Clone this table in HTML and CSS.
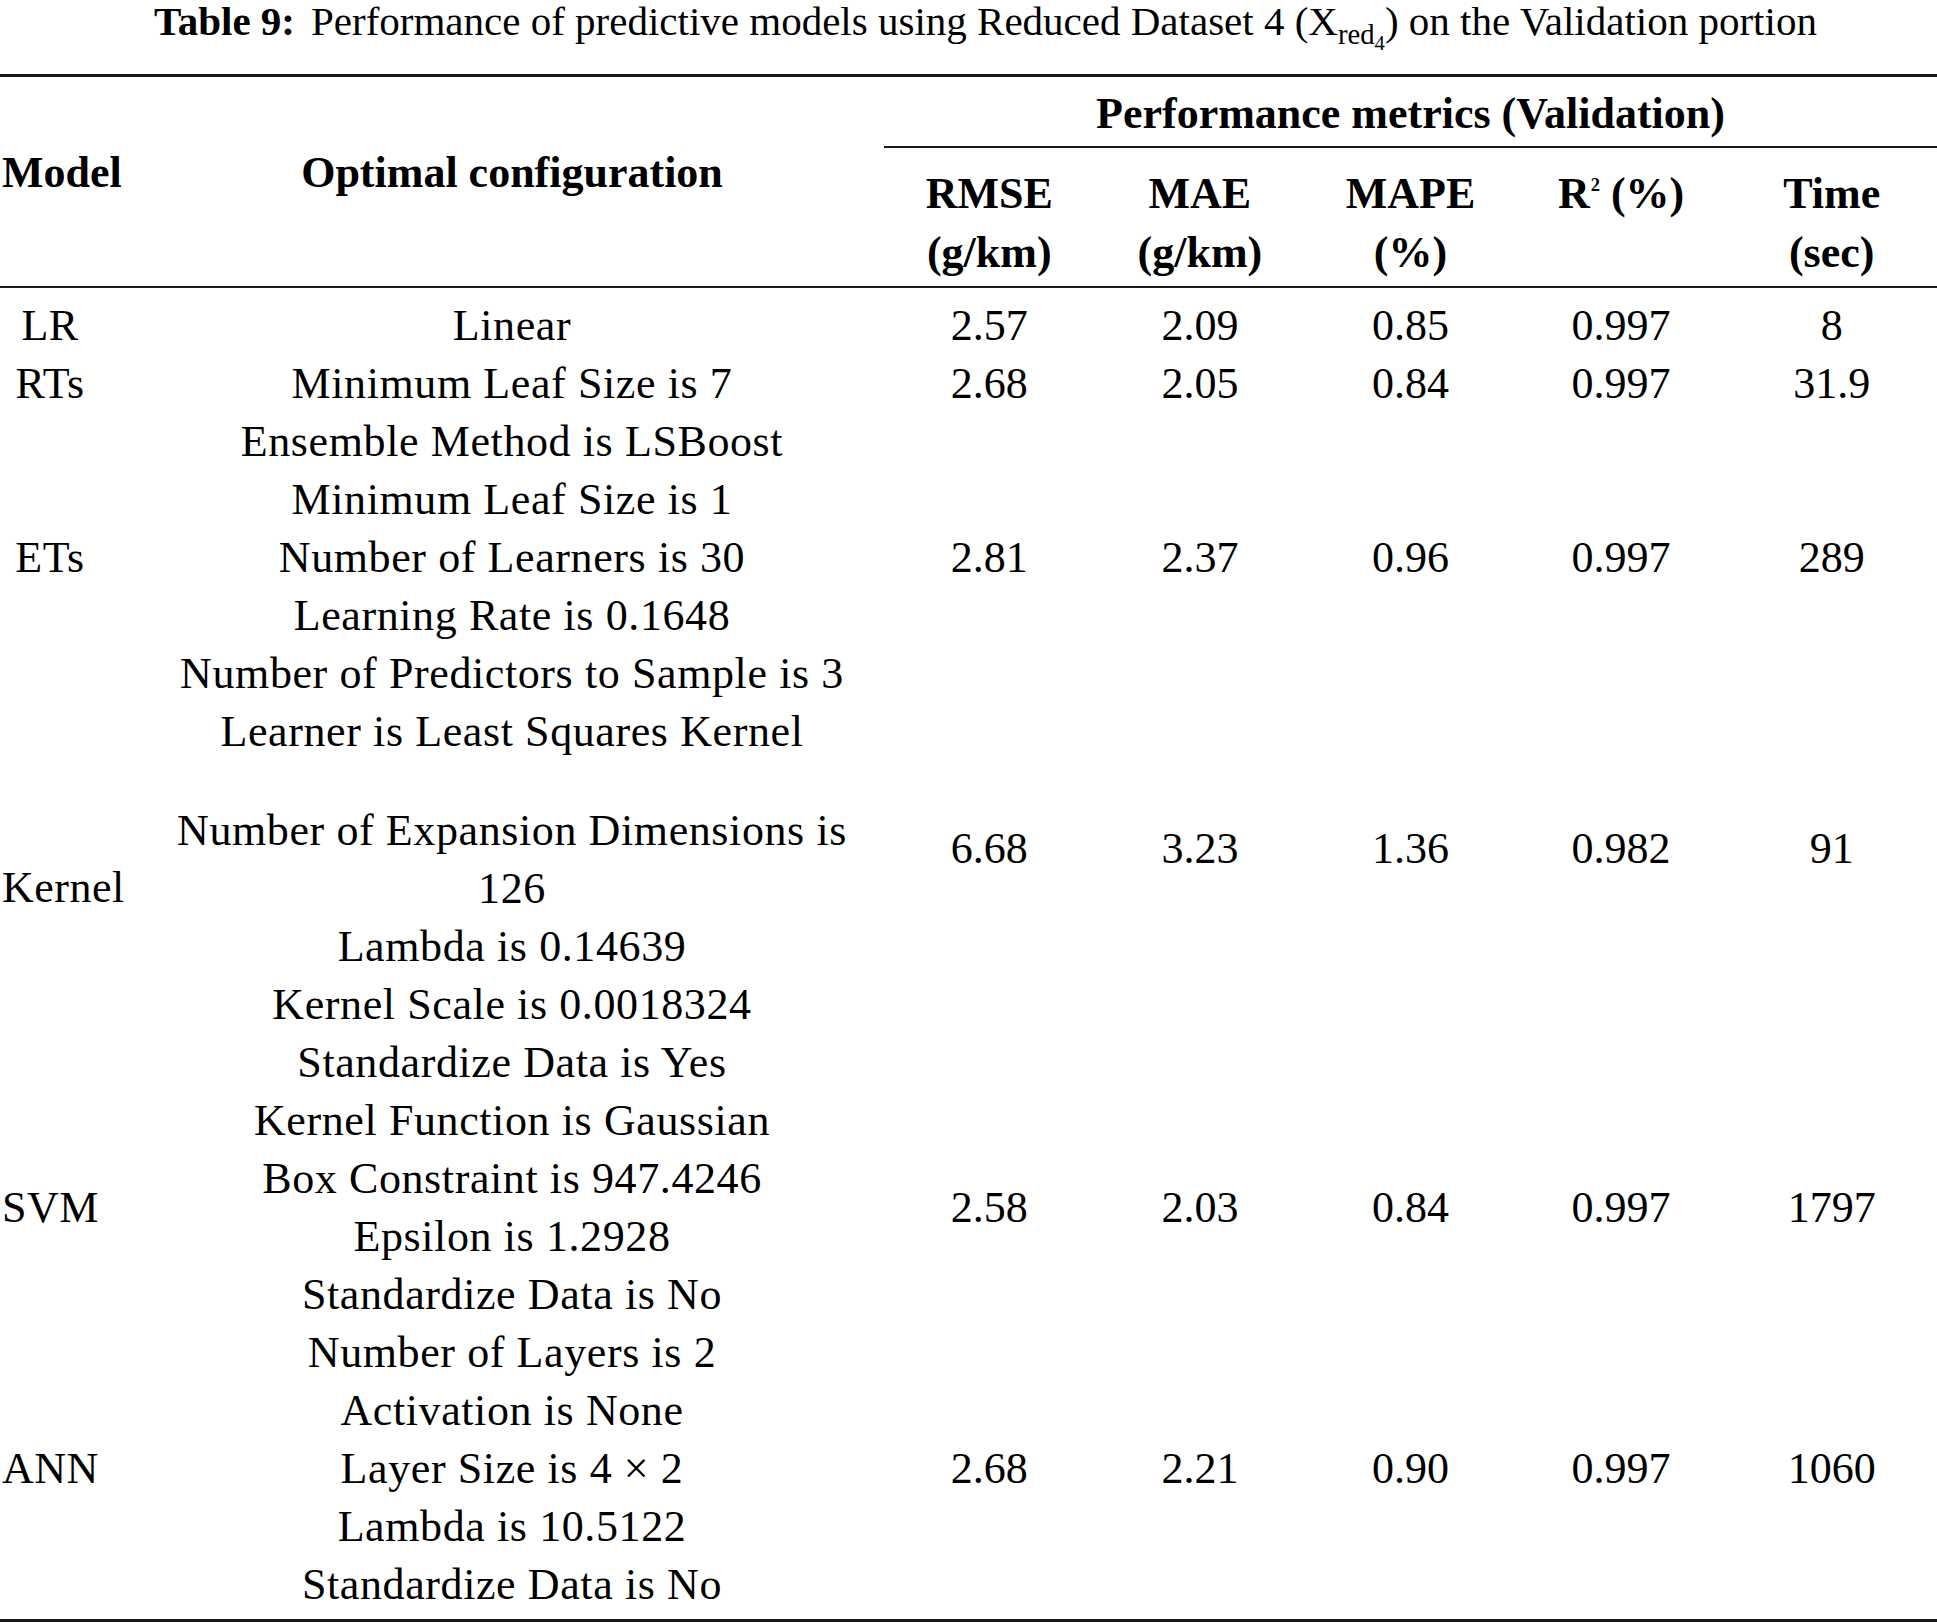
FILE: index.html
```html
<!DOCTYPE html>
<html lang="en">
<head>
<meta charset="utf-8">
<title>Table 9</title>
<link rel="stylesheet" href="styles.css">
</head>
<body>
<div class="caption"><b class="cap-label">Table 9:</b><span class="cap-text">Performance of predictive models using Reduced Dataset 4 (X<sub class="sub1">red<sub class="sub2">4</sub></sub>) on the Validation portion</span></div>
<div class="table">
  <div class="thead">
    <div class="h-model">Model</div>
    <div class="h-config">Optimal configuration</div>
    <div class="h-perf">Performance metrics (Validation)</div>
    <div class="h-metric"><div class="hl">RMSE</div><div class="hl">(g/km)</div></div>
    <div class="h-metric"><div class="hl">MAE</div><div class="hl">(g/km)</div></div>
    <div class="h-metric"><div class="hl">MAPE</div><div class="hl">(%)</div></div>
    <div class="h-metric"><div class="hl">R<sup class="sup">2</sup> (%)</div><div class="hl">&nbsp;</div></div>
    <div class="h-metric"><div class="hl">Time</div><div class="hl">(sec)</div></div>
  </div>
  <div class="tbody">
    <div class="group">
      <div class="c-model">LR</div>
      <div class="c-config"><div class="ln">Linear</div></div>
      <div class="c-val">2.57</div><div class="c-val">2.09</div><div class="c-val">0.85</div><div class="c-val">0.997</div><div class="c-val">8</div>
    </div>
    <div class="group">
      <div class="c-model">RTs</div>
      <div class="c-config"><div class="ln">Minimum Leaf Size is 7</div></div>
      <div class="c-val">2.68</div><div class="c-val">2.05</div><div class="c-val">0.84</div><div class="c-val">0.997</div><div class="c-val">31.9</div>
    </div>
    <div class="group">
      <div class="c-model">ETs</div>
      <div class="c-config">
        <div class="ln">Ensemble Method is LSBoost</div>
        <div class="ln">Minimum Leaf Size is 1</div>
        <div class="ln">Number of Learners is 30</div>
        <div class="ln">Learning Rate is 0.1648</div>
        <div class="ln">Number of Predictors to Sample is 3</div>
      </div>
      <div class="c-val">2.81</div><div class="c-val">2.37</div><div class="c-val">0.96</div><div class="c-val">0.997</div><div class="c-val">289</div>
    </div>
    <div class="group group-kernel">
      <div class="c-model">Kernel</div>
      <div class="c-config">
        <div class="ln">Learner is Least Squares Kernel</div>
        <div class="ln ln-gap">Number of Expansion Dimensions is 126</div>
        <div class="ln">Lambda is 0.14639</div>
        <div class="ln">Kernel Scale is 0.0018324</div>
        <div class="ln">Standardize Data is Yes</div>
      </div>
      <div class="c-val">6.68</div><div class="c-val">3.23</div><div class="c-val">1.36</div><div class="c-val">0.982</div><div class="c-val">91</div>
    </div>
    <div class="group">
      <div class="c-model">SVM</div>
      <div class="c-config">
        <div class="ln">Kernel Function is Gaussian</div>
        <div class="ln">Box Constraint is 947.4246</div>
        <div class="ln">Epsilon is 1.2928</div>
        <div class="ln">Standardize Data is No</div>
      </div>
      <div class="c-val">2.58</div><div class="c-val">2.03</div><div class="c-val">0.84</div><div class="c-val">0.997</div><div class="c-val">1797</div>
    </div>
    <div class="group">
      <div class="c-model">ANN</div>
      <div class="c-config">
        <div class="ln">Number of Layers is 2</div>
        <div class="ln">Activation is None</div>
        <div class="ln">Layer Size is 4 × 2</div>
        <div class="ln">Lambda is 10.5122</div>
        <div class="ln">Standardize Data is No</div>
      </div>
      <div class="c-val">2.68</div><div class="c-val">2.21</div><div class="c-val">0.90</div><div class="c-val">0.997</div><div class="c-val">1060</div>
    </div>
  </div>
</div>
</body>
</html>
```

FILE: styles.css
```css
html, body {
  margin: 0;
  padding: 0;
  background: #ffffff;
}

body {
  color: #000000;
  font-family: "Liberation Serif", "Times New Roman", serif;
  width: 1937px;
}

.caption {
  text-align: center;
  font-size: 41px;
  line-height: 42px;
  height: 42px;
  margin-bottom: 32px;
  padding-left: 34px;
  white-space: nowrap;
}

.cap-label {
  font-weight: bold;
  margin-right: 16px;
}

.sub1 {
  font-size: 0.7em;
  vertical-align: -0.3em;
  line-height: 0;
}

.sub2 {
  font-size: 0.72em;
  vertical-align: -0.3em;
  line-height: 0;
}

.table {
  border-top: 3px solid #1a1a1a;
  border-bottom: 3px solid #1a1a1a;
  font-size: 44px;
}

.thead {
  display: grid;
  grid-template-columns: 140px 744px repeat(5, 1fr);
  border-bottom: 2px solid #1a1a1a;
  font-weight: bold;
}

.h-model {
  grid-column: 1;
  grid-row: 1 / 3;
  align-self: center;
  line-height: 58px;
  padding: 0 42px 17px 2px;
  text-align: center;
  white-space: nowrap;
}

.h-config {
  grid-column: 2;
  grid-row: 1 / 3;
  align-self: center;
  line-height: 58px;
  padding-bottom: 17px;
  text-align: center;
  white-space: nowrap;
}

.h-perf {
  grid-column: 3 / 8;
  grid-row: 1;
  text-align: center;
  line-height: 58px;
  padding: 8px 0 3px;
  border-bottom: 2px solid #1a1a1a;
  white-space: nowrap;
}

.h-metric {
  grid-row: 2;
  text-align: center;
  padding: 16px 0 4px;
  white-space: nowrap;
}

.hl {
  line-height: 59px;
  height: 59px;
}

.sup {
  font-size: 0.42em;
  vertical-align: 17px;
  line-height: 0;
  margin-left: 1px;
}

.tbody {
  padding: 9px 0 5px;
}

.group {
  display: grid;
  grid-template-columns: 140px 744px repeat(5, 1fr);
}

.c-model {
  align-self: center;
  line-height: 58px;
  padding: 0 42px 0 2px;
  text-align: center;
  white-space: nowrap;
  letter-spacing: 0.5px;
}

.c-config {
  padding: 0 8px;
  text-align: center;
  letter-spacing: 0.6px;
}

.ln {
  line-height: 58px;
}

.ln-gap {
  margin-top: 41px;
}

.c-val {
  align-self: center;
  line-height: 58px;
  text-align: center;
  white-space: nowrap;
}

.group-kernel .c-model {
  padding-bottom: 19px;
}

.group-kernel .c-val {
  padding-bottom: 98px;
}
```
